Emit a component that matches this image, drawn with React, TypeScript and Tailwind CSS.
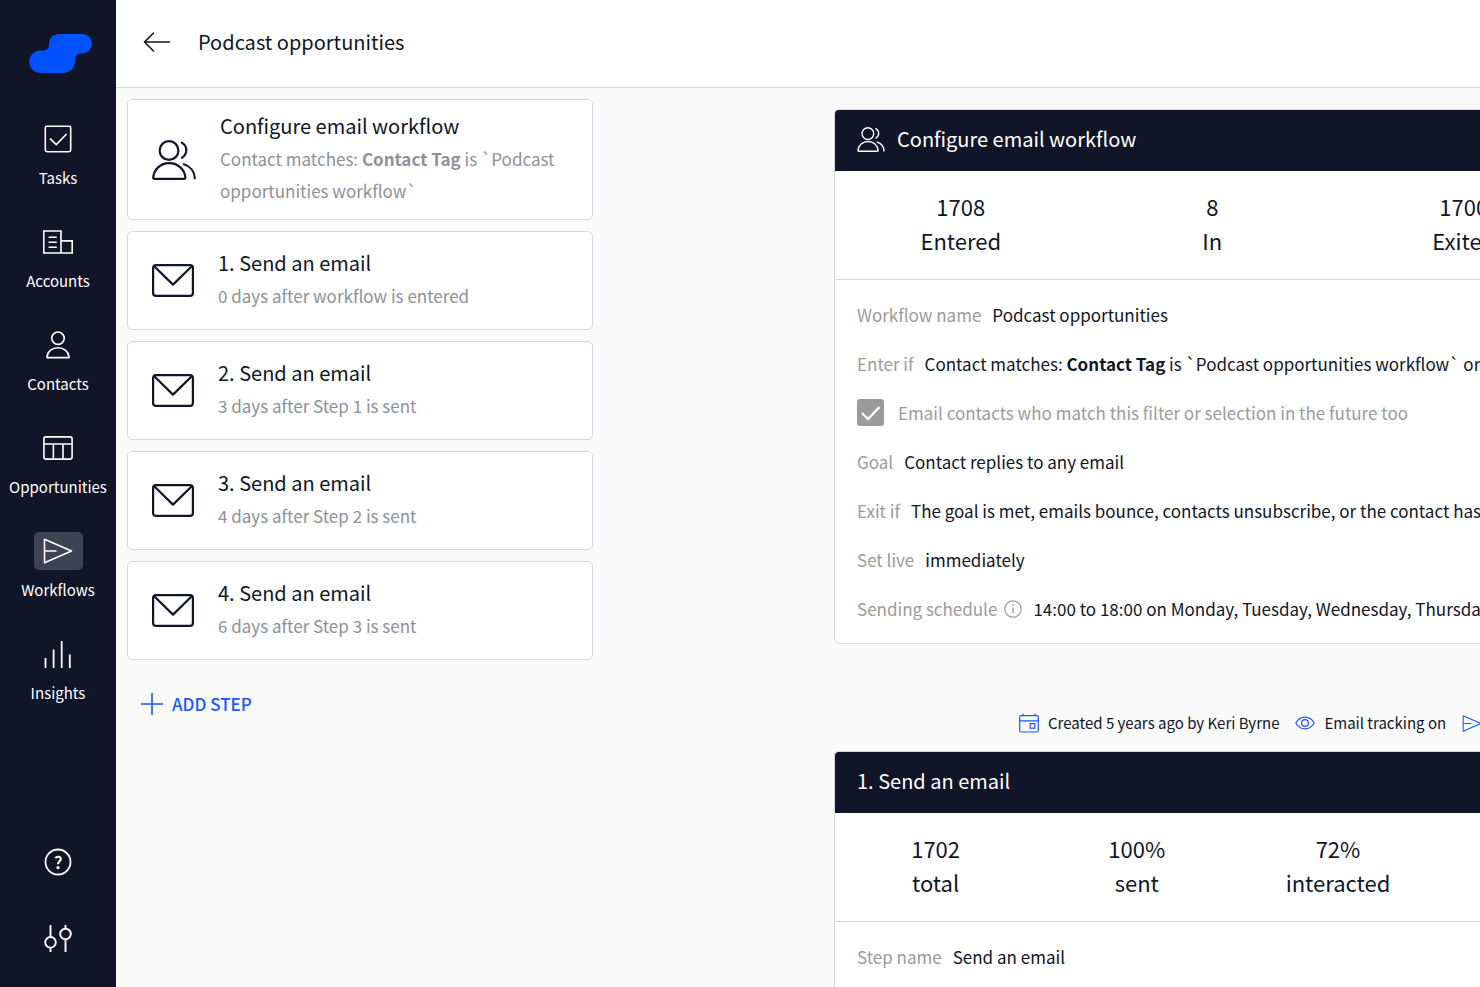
import React from 'react';

interface IconProps {
  className?: string;
}

function TasksIcon({ className }: IconProps) {
  return (
    <svg viewBox="0 0 28 28" className={className} fill="none" stroke="currentColor" strokeWidth="1.6" aria-hidden="true">
      <rect x="1.3" y="1.3" width="25.4" height="25.4" rx="1.6" />
      <path d="M6 13.6 12.3 19.6 22.6 9" />
    </svg>
  );
}

function AccountsIcon({ className }: IconProps) {
  return (
    <svg viewBox="0 0 30 24" className={className} fill="none" stroke="currentColor" strokeWidth="1.6" aria-hidden="true">
      <path d="M.8 1h17.2v22H.8zM18 10.9h11.2V23H18M5.6 7.2h8.2M5.6 12.2h8.2M5.6 17.2h8.2" />
    </svg>
  );
}

function ContactsIcon({ className }: IconProps) {
  return (
    <svg viewBox="0 0 24 28" className={className} fill="none" stroke="currentColor" strokeWidth="1.6" strokeLinejoin="round" aria-hidden="true">
      <circle cx="12" cy="7.2" r="6.2" />
      <path d="M.9 26.6v-.8C1.7 20.3 6.2 16.7 12 16.7s10.3 3.6 11.1 9.1v.8z" />
    </svg>
  );
}

function OpportunitiesIcon({ className }: IconProps) {
  return (
    <svg viewBox="0 0 30 24" className={className} fill="none" stroke="currentColor" strokeWidth="1.6" aria-hidden="true">
      <rect x=".9" y=".9" width="28.2" height="22.2" rx="2" />
      <path d="M1 8h28M10.4 8v15M20 8v15" />
    </svg>
  );
}

function SendIcon({ className }: IconProps) {
  return (
    <svg viewBox="0 0 30 26" className={className} fill="none" stroke="currentColor" strokeWidth="1.6" strokeLinejoin="round" strokeLinecap="round" aria-hidden="true">
      <path d="M1.5 1.2 28.5 13 1.5 24.8zM1.5 13H13" />
    </svg>
  );
}

function InsightsIcon({ className }: IconProps) {
  return (
    <svg viewBox="0 0 28 28" className={className} fill="none" stroke="currentColor" strokeWidth="1.8" aria-hidden="true">
      <path d="M1.5 18v10M9.6 9.6V28M17.7 1v27M25.8 14.4V28" />
    </svg>
  );
}

function HelpIcon({ className }: IconProps) {
  return (
    <svg viewBox="0 0 28 28" className={className} fill="none" stroke="currentColor" strokeWidth="1.8" aria-hidden="true">
      <circle cx="14" cy="14" r="12.5" />
      <path d="M11.3 10.2c.8-1 1.7-1.4 2.8-1.4 1.6 0 2.7.9 2.7 2.3 0 2-2.7 2.3-2.7 4.7v.4" strokeWidth="2.1" />
      <circle cx="14" cy="19.6" r=".8" />
    </svg>
  );
}

function SettingsIcon({ className }: IconProps) {
  return (
    <svg viewBox="0 0 28 28" className={className} fill="none" stroke="currentColor" strokeWidth="1.9" aria-hidden="true">
      <circle cx="6.5" cy="18.3" r="5.3" />
      <circle cx="21.5" cy="10" r="5.3" />
      <path d="M6.5 1v12M6.5 23.6V28M21.5 1v3.7M21.5 15.3V28" />
    </svg>
  );
}

function PeopleIcon({ className }: IconProps) {
  return (
    <svg viewBox="0 0 44 40" className={className} fill="none" stroke="currentColor" strokeWidth="2.2" strokeLinecap="round" strokeLinejoin="round" aria-hidden="true">
      <circle cx="17" cy="10.5" r="9.4" />
      <path d="M1.2 37.6C1.8 29.5 8.5 23.2 17.2 23.2S32.8 29.5 33.4 37.6c0 .8-.4 1.2-1.2 1.2H2.4c-.8 0-1.2-.4-1.2-1.2z" />
      <path d="M29.6 2.6c2.8 1.5 4.7 4.2 4.7 7.5s-1.8 6.1-4.3 7.7M31.8 24.3c6.4 1.8 10.6 7.2 11 14" />
    </svg>
  );
}

function MailIcon({ className }: IconProps) {
  return (
    <svg viewBox="0 0 42 33" className={className} fill="none" stroke="currentColor" strokeWidth="2.2" strokeLinejoin="round" aria-hidden="true">
      <rect x="1.1" y="1.1" width="39.8" height="30.8" rx="3" />
      <path d="M2.2 2.2 21 20.6 39.8 2.2" />
    </svg>
  );
}

function CalendarIcon({ className }: IconProps) {
  return (
    <svg viewBox="0 0 20 20" className={className} fill="none" stroke="currentColor" strokeWidth="1.2" aria-hidden="true">
      <rect x=".7" y="2.7" width="18.6" height="16.3" rx="1.5" />
      <path d="M.7 7.9h18.6M4 .5v2.2M16 .5v2.2" />
      <rect x="11.2" y="10.6" width="4.6" height="4.6" />
    </svg>
  );
}

function EyeIcon({ className }: IconProps) {
  return (
    <svg viewBox="0 0 20 14" className={className} fill="none" stroke="currentColor" strokeWidth="1.2" aria-hidden="true">
      <path d="M.8 7C3 3.2 6.2 1.2 10 1.2S17 3.2 19.2 7C17 10.8 13.8 12.8 10 12.8S3 10.8.8 7z" />
      <circle cx="10" cy="7" r="3.4" />
    </svg>
  );
}

const navItems = [
  { label: 'Tasks', Icon: TasksIcon, size: 'w-[28px] h-[28px]' },
  { label: 'Accounts', Icon: AccountsIcon, size: 'w-[30px] h-[24px]' },
  { label: 'Contacts', Icon: ContactsIcon, size: 'w-[24px] h-[28px]' },
  { label: 'Opportunities', Icon: OpportunitiesIcon, size: 'w-[30px] h-[24px]' },
  { label: 'Workflows', Icon: SendIcon, size: 'w-[30px] h-[26px]', active: true },
  { label: 'Insights', Icon: InsightsIcon, size: 'w-[28px] h-[28px]' },
];

const steps = [
  { title: '1. Send an email', detail: '0 days after workflow is entered' },
  { title: '2. Send an email', detail: '3 days after Step 1 is sent' },
  { title: '3. Send an email', detail: '4 days after Step 2 is sent' },
  { title: '4. Send an email', detail: '6 days after Step 3 is sent' },
];

function Sidebar() {
  return (
    <nav className="flex w-[116px] shrink-0 flex-col items-center bg-[#101527] text-white">
      <a href="#" aria-label="Home" className="mt-[34px] mb-[47px] ml-1">
        <svg viewBox="0 0 63 39" className="h-[39px] w-[63px]" aria-hidden="true">
          <path
            d="M30 0H53.3a9.7 9.7 0 0 1 0 19.4H52C48 19.4 46 22 46 25.5V27C46 34 41 39 34 39H11.500a11.300 11.300 0 0 1 0-22.600H15C18 16.400 20 14 20 11V10C20 4 24 0 30 0z"
            fill="#0052ff"
          />
        </svg>
      </a>
      {navItems.map(({ label, Icon, size, active }) => (
        <a key={label} href="#" className="flex h-[103px] flex-col items-center">
          <span className={`flex h-[38px] w-[49px] items-center justify-center rounded-[5px] ${active ? 'bg-[#3e4354]' : ''}`}>
            <Icon className={size} />
          </span>
          <span className="mt-2 text-[15px] leading-6">{label}</span>
        </a>
      ))}
      <div className="mt-auto mb-[35px] flex flex-col items-center gap-12">
        <button type="button" aria-label="Help">
          <HelpIcon className="h-7 w-7" />
        </button>
        <button type="button" aria-label="Settings">
          <SettingsIcon className="h-7 w-7" />
        </button>
      </div>
    </nav>
  );
}

function Steps() {
  return (
    <div className="flex w-[466px] shrink-0 flex-col gap-[11px]">
      <article className="flex min-h-[121px] items-center rounded-[5px] border border-[#d0d8e4] bg-white pl-6 pr-5">
        <PeopleIcon className="h-10 w-11 shrink-0" />
        <div className="ml-6 pb-[3px]">
          <h2 className="mb-px text-[20px] leading-8">Configure email workflow</h2>
          <p className="text-[17px] leading-8 text-[#8d9198]">
            Contact matches: <b>Contact Tag</b> is `Podcast opportunities workflow`
          </p>
        </div>
      </article>
      {steps.map((step) => (
        <article key={step.title} className="flex min-h-[99px] items-center rounded-[5px] border border-[#d0d8e4] bg-white px-6">
          <MailIcon className="h-[33px] w-[42px] shrink-0" />
          <div className="ml-6 pb-[3px]">
            <h2 className="mb-px text-[20px] leading-8">{step.title}</h2>
            <p className="text-[17px] leading-8 text-[#8d9198]">{step.detail}</p>
          </div>
        </article>
      ))}
      <button type="button" className="mt-[17px] ml-[13px] flex items-center gap-2 self-start text-[17px] leading-8 font-medium text-[#1658ff]">
        <svg viewBox="0 0 24 24" className="h-6 w-6" stroke="currentColor" strokeWidth="1.6" aria-hidden="true">
          <path d="M12 1v22M1 12h22" />
        </svg>
        ADD STEP
      </button>
    </div>
  );
}

function Stat({ value, label }: { value: string; label: string }) {
  return (
    <div className="text-center text-[22px] leading-[34px]">
      <div>{value}</div>
      <div>{label}</div>
    </div>
  );
}

function Field({ label, children }: { label: React.ReactNode; children: React.ReactNode }) {
  return (
    <div className="flex h-[49px] items-center gap-[11px] whitespace-nowrap">
      <dt className="flex items-center gap-[7px] text-[#9b9b9b]">{label}</dt>
      <dd>{children}</dd>
    </div>
  );
}

function Details() {
  return (
    <div className="ml-[241px] mt-[10px] w-[1008px] shrink-0">
      <section className="overflow-hidden rounded-[5px] border border-[#d0d8e4] bg-white">
        <header className="-m-px flex h-[62px] items-center gap-3 bg-[#101527] px-[23px] pb-0.5 text-white">
          <PeopleIcon className="h-[25px] w-7" />
          <h2 className="text-[20px] leading-8">Configure email workflow</h2>
        </header>
        <div className="grid grid-cols-4 border-b border-[#d0d8e4] pt-[19px] pb-[22px]">
          <Stat value="1708" label="Entered" />
          <Stat value="8" label="In" />
          <Stat value="1700" label="Exited" />
        </div>
        <dl className="px-[22px] py-[10px] text-[17px]">
          <Field label="Workflow name">Podcast opportunities</Field>
          <Field label="Enter if">
            Contact matches: <b>Contact Tag</b> is `Podcast opportunities workflow` or
          </Field>
          <div className="flex h-[49px] items-center">
            <label className="flex items-center gap-[14px] text-[#9b9b9b]">
              <span className="relative flex h-[27px] w-[27px]">
                <input type="checkbox" checked readOnly disabled className="h-full w-full appearance-none rounded-[3px] bg-[#9b9b9b]" />
                <svg viewBox="0 0 27 27" className="pointer-events-none absolute inset-0" fill="none" stroke="#fff" strokeWidth="2.4" aria-hidden="true">
                  <path d="M5 14 11 20 22.5 8" />
                </svg>
              </span>
              Email contacts who match this filter or selection in the future too
            </label>
          </div>
          <Field label="Goal">Contact replies to any email</Field>
          <Field label="Exit if">The goal is met, emails bounce, contacts unsubscribe, or the contact has</Field>
          <Field label="Set live">immediately</Field>
          <Field
            label={
              <>
                Sending schedule
                <svg viewBox="0 0 18 18" className="h-[18px] w-[18px]" fill="none" stroke="currentColor" strokeWidth="1.2" aria-hidden="true">
                  <circle cx="9" cy="9" r="8.2" />
                  <path d="M9 7.5V13M9 4.6v1.5" strokeWidth="1.4" />
                </svg>
              </>
            }
          >
            14:00 to 18:00 on Monday, Tuesday, Wednesday, Thursday
          </Field>
        </dl>
      </section>

      <div className="mt-[63px] mb-3 flex h-8 items-center pl-[185px] text-[15px] whitespace-nowrap">
        <CalendarIcon className="h-5 w-5 text-[#1658ff]" />
        <span className="ml-[9px]">Created 5 years ago by Keri Byrne</span>
        <EyeIcon className="ml-4 h-[14px] w-5 text-[#1658ff]" />
        <span className="ml-[9px]">Email tracking on</span>
        <SendIcon className="ml-4 h-[17px] w-5 text-[#1658ff]" />
      </div>

      <section className="overflow-hidden rounded-[5px] border border-[#d0d8e4] bg-white">
        <header className="-m-px flex h-[62px] items-center bg-[#101527] px-[23px] pb-0.5 text-white">
          <h2 className="text-[20px] leading-8">1. Send an email</h2>
        </header>
        <div className="grid grid-cols-5 border-b border-[#d0d8e4] pt-[19px] pb-[22px]">
          <Stat value="1702" label="total" />
          <Stat value="100%" label="sent" />
          <Stat value="72%" label="interacted" />
        </div>
        <dl className="px-[22px] py-[10px] text-[17px]">
          <Field label="Step name">Send an email</Field>
        </dl>
      </section>
    </div>
  );
}

export default function App() {
  return (
    <div className="flex h-screen overflow-hidden bg-[#fafafa] font-['Noto_Sans_CJK_SC',sans-serif] text-[#101527]">
      <Sidebar />
      <main className="flex min-w-0 flex-1 flex-col">
        <header className="flex h-[88px] shrink-0 items-center gap-[27px] border-b border-[#d0d8e4] bg-white px-[27px] pb-[3px]">
          <button type="button" aria-label="Back">
            <svg viewBox="0 0 28 20" className="h-5 w-7" fill="none" stroke="currentColor" strokeWidth="1.6" strokeLinecap="round" strokeLinejoin="round" aria-hidden="true">
              <path d="M26.5 10H1.500M10.500 1 1.500 10l9 9" />
            </svg>
          </button>
          <h1 className="text-[20px] leading-8">Podcast opportunities</h1>
        </header>
        <div className="flex min-h-0 flex-1 overflow-hidden pl-[11px] pt-[11px]">
          <Steps />
          <Details />
        </div>
      </main>
    </div>
  );
}
